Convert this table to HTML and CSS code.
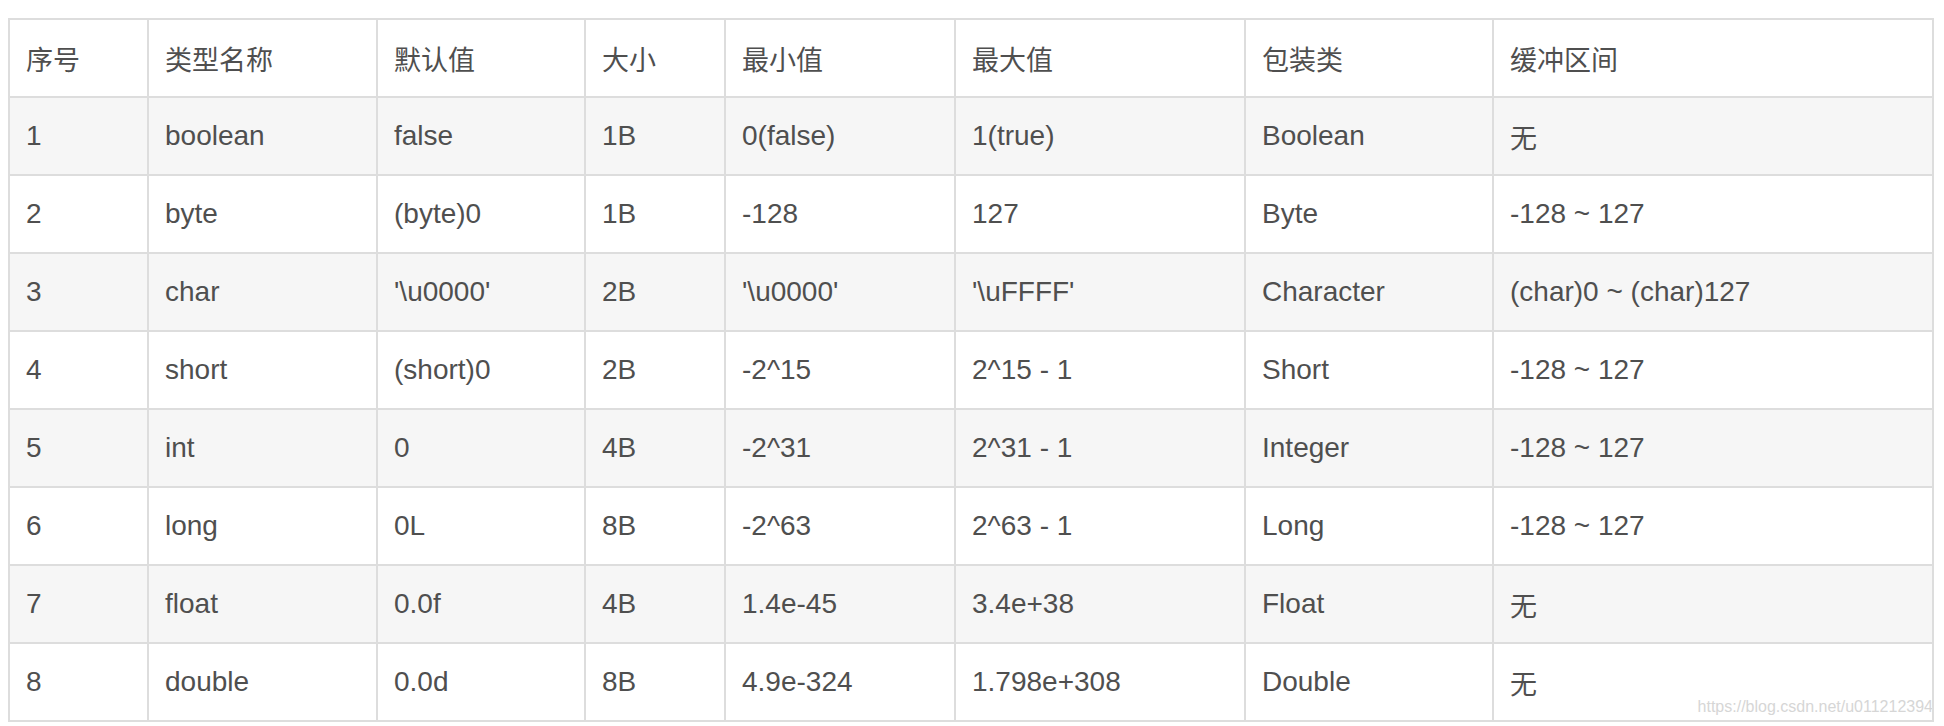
FILE: index.html
```html
<!DOCTYPE html>
<html lang="zh">
<head>
<meta charset="utf-8">
<title>Java 基本数据类型</title>
<link rel="stylesheet" href="styles.css">
</head>
<body>
<div class="wrap">
<table class="types">
<colgroup>
<col class="c1"><col class="c2"><col class="c3"><col class="c4"><col class="c5"><col class="c6"><col class="c7"><col class="c8">
</colgroup>
<thead>
<tr><th>序号</th><th>类型名称</th><th>默认值</th><th>大小</th><th>最小值</th><th>最大值</th><th>包装类</th><th>缓冲区间</th></tr>
</thead>
<tbody>
<tr><td>1</td><td>boolean</td><td>false</td><td>1B</td><td>0(false)</td><td>1(true)</td><td>Boolean</td><td class="cjk">无</td></tr>
<tr><td>2</td><td>byte</td><td>(byte)0</td><td>1B</td><td>-128</td><td>127</td><td>Byte</td><td>-128 ~ 127</td></tr>
<tr><td>3</td><td>char</td><td>'\u0000'</td><td>2B</td><td>'\u0000'</td><td>'\uFFFF'</td><td>Character</td><td>(char)0 ~ (char)127</td></tr>
<tr><td>4</td><td>short</td><td>(short)0</td><td>2B</td><td>-2^15</td><td>2^15 - 1</td><td>Short</td><td>-128 ~ 127</td></tr>
<tr><td>5</td><td>int</td><td>0</td><td>4B</td><td>-2^31</td><td>2^31 - 1</td><td>Integer</td><td>-128 ~ 127</td></tr>
<tr><td>6</td><td>long</td><td>0L</td><td>8B</td><td>-2^63</td><td>2^63 - 1</td><td>Long</td><td>-128 ~ 127</td></tr>
<tr><td>7</td><td>float</td><td>0.0f</td><td>4B</td><td>1.4e-45</td><td>3.4e+38</td><td>Float</td><td class="cjk">无</td></tr>
<tr><td>8</td><td>double</td><td>0.0d</td><td>8B</td><td>4.9e-324</td><td>1.798e+308</td><td>Double</td><td class="cjk">无</td></tr>
</tbody>
</table>
<span class="watermark">https://blog.csdn.net/u011212394</span>
</div>
</body>
</html>
```
FILE: styles.css
```css
html, body {
  margin: 0;
  padding: 0;
  background: #ffffff;
}
body {
  padding: 18px 0 0 8px;
  font-family: "Liberation Sans", "Noto Sans CJK SC", Arial, sans-serif;
  color: #4f4f4f;
}
.wrap {
  position: relative;
  width: 1924px;
}
.types {
  width: 1924px;
  border-collapse: collapse;
  table-layout: fixed;
  font-size: 28px;
}
.c1 { width: 139px; }
.c2 { width: 229px; }
.c3 { width: 208px; }
.c4 { width: 140px; }
.c5 { width: 230px; }
.c6 { width: 290px; }
.c7 { width: 248px; }
.c8 { width: 440px; }
.types th,
.types td {
  border: 2px solid #dddddd;
  height: 78px;
  padding: 0 16px;
  text-align: left;
  vertical-align: middle;
  font-weight: normal;
  white-space: nowrap;
  box-sizing: border-box;
}
.types th,
.types td.cjk {
  font-size: 27px;
}
.types tbody tr:nth-child(odd) {
  background: #f6f6f6;
}
.types thead tr {
  background: #ffffff;
}
.watermark {
  position: absolute;
  right: -1px;
  bottom: 6px;
  font-size: 16px;
  color: #d6d6d6;
  text-shadow: 0 0 1px #ffffff;
  white-space: nowrap;
}
```
